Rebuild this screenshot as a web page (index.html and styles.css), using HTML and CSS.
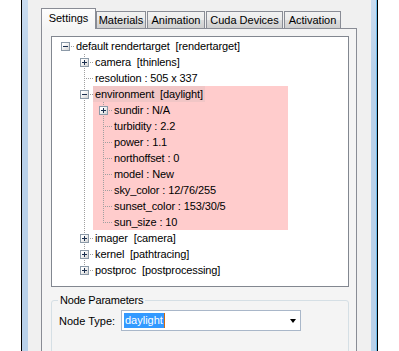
FILE: index.html
```html
<!DOCTYPE html>
<html lang="en">
<head>
    <meta charset="UTF-8">
    <meta name="viewport" content="width=device-width, initial-scale=1.0">
    <title>Render Settings</title>
    <link rel="stylesheet" href="styles.css">
</head>
<body>

<div class="window">
    <div class="client">

        <div class="tabs">
            <div class="tab active">Settings</div>
            <div class="tab first">Materials</div>
            <div class="tab">Animation</div>
            <div class="tab">Cuda Devices</div>
            <div class="tab">Activation</div>
        </div>

        <div class="panel">
            <div class="tree">
                <ul class="nodes">
                    <li class="node">
                        <span class="gutter"><span class="box minus"></span></span>
                        <div class="body">
                            <div class="label">default rendertarget  [rendertarget]</div>
                            <ul class="nodes kids">
                                <li class="node">
                                    <span class="gutter"><span class="box plus"></span></span>
                                    <div class="body"><div class="label">camera  [thinlens]</div></div>
                                </li>
                                <li class="node">
                                    <span class="gutter"></span>
                                    <div class="body"><div class="label">resolution : 505 x 337</div></div>
                                </li>
                                <li class="node">
                                    <span class="gutter"><span class="box minus"></span></span>
                                    <div class="body marked">
                                        <div class="label selected">environment  [daylight]</div>
                                        <ul class="nodes kids">
                                            <li class="node">
                                                <span class="gutter"><span class="box plus"></span></span>
                                                <div class="body"><div class="label">sundir : N/A</div></div>
                                            </li>
                                            <li class="node">
                                                <span class="gutter"></span>
                                                <div class="body"><div class="label">turbidity : 2.2</div></div>
                                            </li>
                                            <li class="node">
                                                <span class="gutter"></span>
                                                <div class="body"><div class="label">power : 1.1</div></div>
                                            </li>
                                            <li class="node">
                                                <span class="gutter"></span>
                                                <div class="body"><div class="label">northoffset : 0</div></div>
                                            </li>
                                            <li class="node">
                                                <span class="gutter"></span>
                                                <div class="body"><div class="label">model : New</div></div>
                                            </li>
                                            <li class="node">
                                                <span class="gutter"></span>
                                                <div class="body"><div class="label">sky_color : 12/76/255</div></div>
                                            </li>
                                            <li class="node">
                                                <span class="gutter"></span>
                                                <div class="body"><div class="label">sunset_color : 153/30/5</div></div>
                                            </li>
                                            <li class="node">
                                                <span class="gutter"></span>
                                                <div class="body"><div class="label">sun_size : 10</div></div>
                                            </li>
                                        </ul>
                                    </div>
                                </li>
                                <li class="node">
                                    <span class="gutter"><span class="box plus"></span></span>
                                    <div class="body"><div class="label">imager  [camera]</div></div>
                                </li>
                                <li class="node">
                                    <span class="gutter"><span class="box plus"></span></span>
                                    <div class="body"><div class="label">kernel  [pathtracing]</div></div>
                                </li>
                                <li class="node">
                                    <span class="gutter"><span class="box plus"></span></span>
                                    <div class="body"><div class="label">postproc  [postprocessing]</div></div>
                                </li>
                            </ul>
                        </div>
                    </li>
                </ul>
            </div>

            <fieldset class="group">
                <legend>Node Parameters</legend>
                <div class="field">
                    <label for="nodeType">Node Type:</label>
                    <div class="combo" id="nodeType">
                        <span class="value">daylight</span>
                        <span class="arrow"></span>
                    </div>
                </div>
            </fieldset>
        </div>

    </div>
</div>

</body>
</html>
```

FILE: styles.css
```css
html, body {
    margin: 0;
    padding: 0;
    background: #fff;
    overflow: hidden;
}

body {
    font-family: "Liberation Sans", Arial, sans-serif;
    font-size: 11px;
    color: #000;
}

/* window frame */
.window {
    margin-left: 21px;
    width: 357px;
    height: 351px;
    box-sizing: border-box;
    padding: 0 6px;
    border-left: 1px solid #000;
    border-right: 1px solid #000;
    background: linear-gradient(#cadcf0, #b9d1ea 70px);
    box-shadow: inset -1px 0 #6cbcec;
    overflow: hidden;
}

.client {
    height: 100%;
    background: #f0f0f0;
    padding: 8px 14px 0 13px;
    box-sizing: border-box;
    overflow: hidden;
}

/* tabs */
.tabs {
    display: flex;
    align-items: flex-end;
    height: 20px;
}

.tab {
    height: 17px;
    line-height: 16px;
    box-sizing: border-box;
    text-align: center;
    border: 1px solid #898c95;
    border-bottom: none;
    background: linear-gradient(#f2f2f2 0%, #ebebeb 50%, #dddddd 50%, #cfcfcf 100%);
    margin-left: 1px;
}

.tab:nth-child(2) { width: 50px; margin-left: 0; }
.tab:nth-child(3) { width: 58px; }
.tab:nth-child(4) { width: 77px; }
.tab:nth-child(5) { width: 57px; }

.tab.active {
    width: 55px;
    height: 21px;
    line-height: 18px;
    margin: 0 0 -1px 0;
    background: linear-gradient(#fdfdfd, #f4f4f4);
    position: relative;
    z-index: 1;
}

.panel {
    border: 1px solid #898c95;
    background: #f4f4f4;
    padding: 7px 7px 0 9px;
    height: 330px;
}

/* tree view */
.tree {
    height: 251px;
    box-sizing: border-box;
    border: 1px solid #828790;
    background: #fff;
    padding: 1px 0 0 4px;
}

.nodes {
    list-style: none;
    margin: 0;
    padding: 0;
}

.kids {
    margin-left: 1px;
    background: repeating-linear-gradient(to bottom, #a0a0a0 0 1px, transparent 1px 2px) 9px 0 / 1px calc(100% - 8px) no-repeat;
}

.node {
    display: grid;
    grid-template-columns: 18px max-content;
}

.gutter {
    display: block;
    height: 16px;
    background: repeating-linear-gradient(to right, #a0a0a0 0 1px, transparent 1px 2px) 9px 8px / 9px 1px no-repeat;
}

.box {
    display: block;
    width: 9px;
    height: 9px;
    box-sizing: border-box;
    margin: 4px 0 0 5px;
    border: 1px solid #8c9aa8;
}

.box.minus {
    background:
        linear-gradient(#1b2f4e, #1b2f4e) center / 5px 1px no-repeat,
        linear-gradient(135deg, #ffffff 20%, #d4d4d4);
}

.box.plus {
    background:
        linear-gradient(#1b2f4e, #1b2f4e) center / 5px 1px no-repeat,
        linear-gradient(#1b2f4e, #1b2f4e) center / 1px 5px no-repeat,
        linear-gradient(135deg, #ffffff 20%, #d4d4d4);
}

.body {
    display: flex;
    flex-direction: column;
    align-items: flex-start;
}

.body.marked {
    width: 195px;
    background: #ffcccc;
}

.label {
    height: 16px;
    line-height: 16px;
    padding: 0 2px;
    white-space: pre;
    letter-spacing: -0.12px;
}

.label.selected {
    background: #f1c6c6;
}

/* group box */
.group {
    margin: 7px 0 0 0;
    padding: 3px 8px 0 6px;
    border: 1px solid #d5dfe5;
    border-radius: 3px;
    height: 80px;
}

.group legend {
    padding: 0 2px;
    line-height: 13px;
    letter-spacing: -0.2px;
}

.field {
    display: flex;
    align-items: center;
    margin-left: 1px;
}

.field label {
    width: 62px;
}

.combo {
    width: 180px;
    height: 21px;
    box-sizing: border-box;
    border: 1px solid #a9b7c9;
    background: #fff;
    display: flex;
    align-items: center;
    justify-content: space-between;
    padding: 0 4px 0 2px;
}

.value {
    background: #3399ff;
    color: #fff;
    line-height: 15px;
    padding: 0 1px;
    border-right: 1px solid #d06a10;
}

.arrow {
    width: 0;
    height: 0;
    border-left: 3.5px solid transparent;
    border-right: 3.5px solid transparent;
    border-top: 4px solid #000;
    margin-top: 1px;
}
```
